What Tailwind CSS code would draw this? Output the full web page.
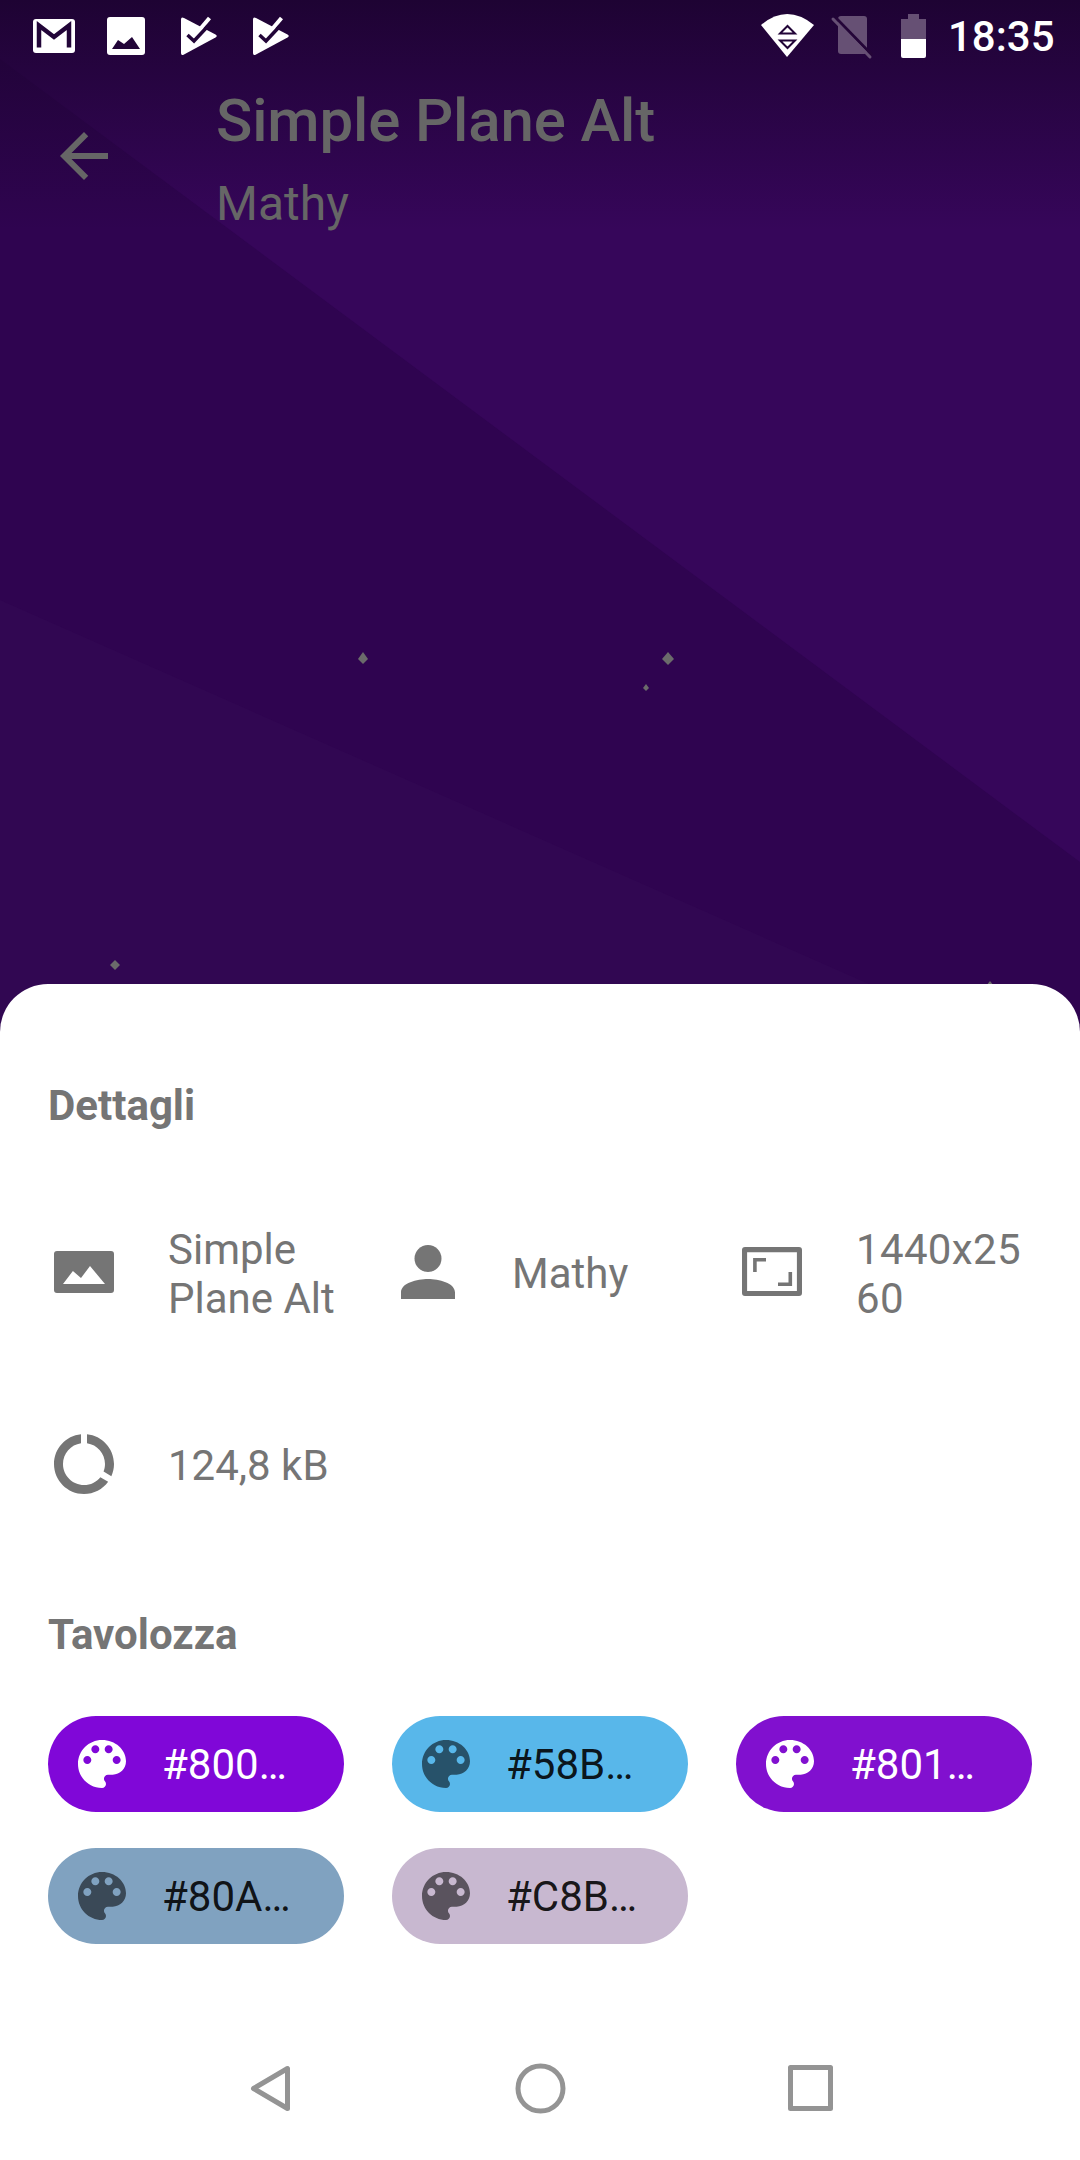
<!DOCTYPE html>
<html>
<head>
<meta charset="utf-8">
<script src="https://cdn.jsdelivr.net/npm/@tailwindcss/browser@4"></script>
</head>
<body class="m-0">
<div class="relative w-[1080px] h-[2160px] overflow-hidden flex flex-col font-['Roboto',sans-serif] bg-[#2f0450]">
  <!-- wallpaper -->
  <svg class="absolute left-0 top-0 w-[1080px] h-[1040px]" viewBox="0 0 1080 1040">
    <defs>
      <linearGradient id="scrim" x1="0" y1="0" x2="0" y2="1">
        <stop offset="0" stop-color="#1e0333" stop-opacity="1"/>
        <stop offset="1" stop-color="#1e0333" stop-opacity="0"/>
      </linearGradient>
    </defs>
    <rect width="1080" height="1040" fill="#2f0450"/>
    <polygon points="0,59 1080,862 1080,0 0,0" fill="#36065a"/>
    <polygon points="0,600 996,1040 0,1040" fill="#310752"/>
    <rect width="1080" height="230" fill="url(#scrim)"/>
    <g fill="#6b6b6b">
      <polygon points="363,652 368,659 363,664 358,659"/>
      <polygon points="668,652 674,659 668,665 662,659"/>
      <polygon points="646,684 649,688 646,691 643,688"/>
      <polygon points="115,960 120,965 115,970 110,965"/>
      <polygon points="990,981 994,986 986,986"/>
    </g>
  </svg>

  <!-- top area -->
  <div class="relative h-[984px] shrink-0">
    <!-- status bar -->
    <div class="relative h-[72px]">
      <svg class="absolute left-0 top-0 w-[1080px] h-[72px]" viewBox="0 0 1080 72">
        <rect x="33" y="19" width="42" height="34" rx="3" fill="#fff"/>
        <path d="M39 47.500V25.500L54 37L69 25.500V47.500" fill="none" stroke="#220538" stroke-width="4.500"/>
        <rect x="107" y="17" width="38" height="38" rx="3" fill="#fff"/>
        <path d="M112 49L118 40L124 44L132 37L140 49Z" fill="#220538"/>
        <path d="M181 19.500Q181 16.500 184 18L215.500 34.500Q218 36 215.500 37.500L184 54.500Q181 56 181 53Z" fill="#fff"/>
        <path d="M209.500 18L196 34" fill="none" stroke="#fff" stroke-width="4"/>
        <path d="M187.500 35L194 41L208 26" fill="none" stroke="#220538" stroke-width="3.500"/>
        <g transform="translate(72 0)">
          <path d="M181 19.500Q181 16.500 184 18L215.500 34.500Q218 36 215.500 37.500L184 54.500Q181 56 181 53Z" fill="#fff"/>
          <path d="M209.500 18L196 34" fill="none" stroke="#fff" stroke-width="4"/>
          <path d="M187.500 35L194 41L208 26" fill="none" stroke="#220538" stroke-width="3.500"/>
        </g>
        <path d="M761 25Q787 3 814 25L787 57Z" fill="#fff"/>
        <path d="M787.500 26L780 33.500H795ZM787.500 48L780 40.500H795Z" fill="none" stroke="#220538" stroke-width="2"/>
        <rect x="838" y="16" width="29" height="38" rx="3" fill="#665074"/>
        <path d="M836 18L872 55" stroke="#240538" stroke-width="3"/>
        <path d="M833 19L870 57" stroke="#665074" stroke-width="3" stroke-linecap="round"/>
        <path d="M908 14H919V19H926V39H901V19H908Z" fill="#665074"/>
        <path d="M901 39H926V56Q926 58 924 58H903Q901 58 901 56Z" fill="#fff"/>
      </svg>
      <span class="absolute left-[948px] top-[12px] text-[42px] leading-[49px] font-medium text-white">18:35</span>
    </div>
    <!-- app bar -->
    <div class="relative flex items-start pl-[48px] pt-[14px]">
      <svg class="w-[72px] h-[72px] mt-[34px] shrink-0 fill-[#666666]" viewBox="0 0 24 24"><path d="M20 11H7.830l5.590-5.590L12 4l-8 8 8 8 1.410-1.410L7.830 13H20v-2z"/></svg>
      <div class="ml-[96px] flex flex-col">
        <span class="text-[60px] leading-[70px] font-medium tracking-[-0.15px] text-[#666666]">Simple Plane Alt</span>
        <span class="text-[48px] leading-[56px] mt-[20px] text-[#666666]">Mathy</span>
      </div>
    </div>
  </div>

  <!-- sheet -->
  <div class="relative flex-1 bg-white rounded-t-[48px] px-[48px] pt-[97px]">
    <h2 class="text-[42px] leading-[49px] font-bold text-[#757575]">Dettagli</h2>
    <div class="grid grid-cols-3 gap-x-[48px] gap-y-[48px] mt-[70px] text-[#757575] text-[42px] leading-[49px]">
      <div class="flex items-center h-[144px] gap-[48px]">
        <svg class="w-[72px] h-[72px] shrink-0 fill-[#757575]" viewBox="0 0 24 24"><path fill-rule="evenodd" d="M3 5H21Q22 5 22 6V18Q22 19 21 19H3Q2 19 2 18V6Q2 5 3 5ZM5 16H19L14 10L11 14L8.300 11.700Z"/></svg>
        <div class="w-[176px] pt-[3px] break-words">Simple Plane Alt</div>
      </div>
      <div class="flex items-center h-[144px] gap-[48px]">
        <svg class="w-[72px] h-[72px] shrink-0 fill-[#757575]" viewBox="0 0 24 24"><circle cx="12" cy="7.500" r="4.500"/><path d="M12 14.300c-3.600 0-9 1.300-9 4.500V21h18v-2.200c0-3.200-5.400-4.500-9-4.500z"/></svg>
        <div class="w-[176px] pt-[3px] break-words">Mathy</div>
      </div>
      <div class="flex items-center h-[144px] gap-[48px]">
        <svg class="w-[72px] h-[72px] shrink-0 fill-[#757575]" viewBox="0 0 24 24"><path fill-rule="evenodd" d="M3 3.700H21Q22 3.700 22 4.700V19Q22 20 21 20H3Q2 20 2 19V4.700Q2 3.700 3 3.700ZM3.700 5.400V18.300H20.300V5.400Z"/><path d="M5.700 7.300H10V8.500H6.900V12H5.700ZM18.700 12V16.700H14V15.500H17.500V12Z"/></svg>
        <div class="w-[176px] pt-[3px] tracking-[0.35px] break-words">1440x2560</div>
      </div>
      <div class="flex items-center h-[144px] gap-[48px]">
        <svg class="w-[72px] h-[72px] shrink-0 fill-[#757575]" viewBox="0 0 24 24"><path d="M13 2.050v3.030c3.390.49 6 3.390 6 6.920 0 .9-.18 1.750-.48 2.540l2.600 1.530c.56-1.240.88-2.620.88-4.070 0-5.180-3.950-9.450-9-9.950zM12 19c-3.870 0-7-3.130-7-7 0-3.530 2.610-6.430 6-6.920V2.050c-5.060.5-9 4.760-9 9.950 0 5.520 4.470 10 9.990 10 3.310 0 6.240-1.610 8.060-4.090l-2.600-1.530C16.170 17.980 14.210 19 12 19z"/></svg>
        <div class="w-[176px] pt-[3px] break-words">124,8 kB</div>
      </div>
    </div>
    <h2 class="mt-[74px] text-[42px] leading-[49px] font-bold text-[#757575]">Tavolozza</h2>
    <div class="grid grid-cols-3 gap-x-[48px] gap-y-[36px] mt-[57px] text-[42px] leading-[49px]">
      <div class="flex items-center h-[96px] rounded-full bg-[#8007d8] pl-[22px] gap-[28px] text-white">
        <svg class="w-[64px] h-[64px] shrink-0 fill-white" viewBox="0 0 24 24"><path d="M12 3c-4.970 0-9 4.030-9 9s4.030 9 9 9c.83 0 1.500-.67 1.500-1.500 0-.39-.15-.74-.39-1.010-.23-.26-.38-.61-.38-.99 0-.83.67-1.500 1.500-1.500H16c2.760 0 5-2.240 5-5 0-4.420-4.030-8-9-8zm-5.500 9c-.83 0-1.500-.67-1.500-1.500S5.670 9 6.500 9 8 9.670 8 10.500 7.330 12 6.500 12zm3-4C8.670 8 8 7.330 8 6.500S8.670 5 9.500 5s1.500.67 1.500 1.500S10.330 8 9.500 8zm5 0c-.83 0-1.500-.67-1.500-1.500S13.670 5 14.500 5s1.500.67 1.500 1.500S15.330 8 14.500 8zm3 4c-.83 0-1.500-.67-1.500-1.500S16.670 9 17.500 9s1.500.67 1.500 1.500-.67 1.500-1.500 1.500z"/></svg>
        <span>#800…</span>
      </div>
      <div class="flex items-center h-[96px] rounded-full bg-[#58b7ea] pl-[22px] gap-[28px] text-black/90">
        <svg class="w-[64px] h-[64px] shrink-0 fill-black/55" viewBox="0 0 24 24"><path d="M12 3c-4.970 0-9 4.030-9 9s4.030 9 9 9c.83 0 1.500-.67 1.500-1.500 0-.39-.15-.74-.39-1.010-.23-.26-.38-.61-.38-.99 0-.83.67-1.500 1.500-1.500H16c2.760 0 5-2.240 5-5 0-4.420-4.030-8-9-8zm-5.500 9c-.83 0-1.500-.67-1.500-1.500S5.670 9 6.500 9 8 9.670 8 10.500 7.330 12 6.500 12zm3-4C8.670 8 8 7.330 8 6.500S8.670 5 9.500 5s1.500.67 1.500 1.500S10.330 8 9.500 8zm5 0c-.83 0-1.500-.67-1.500-1.500S13.670 5 14.500 5s1.500.67 1.500 1.500S15.330 8 14.500 8zm3 4c-.83 0-1.500-.67-1.500-1.500S16.670 9 17.500 9s1.500.67 1.500 1.500-.67 1.500-1.500 1.500z"/></svg>
        <span>#58B…</span>
      </div>
      <div class="flex items-center h-[96px] rounded-full bg-[#8110cf] pl-[22px] gap-[28px] text-white">
        <svg class="w-[64px] h-[64px] shrink-0 fill-white" viewBox="0 0 24 24"><path d="M12 3c-4.970 0-9 4.030-9 9s4.030 9 9 9c.83 0 1.500-.67 1.500-1.500 0-.39-.15-.74-.39-1.010-.23-.26-.38-.61-.38-.99 0-.83.67-1.500 1.500-1.500H16c2.760 0 5-2.240 5-5 0-4.420-4.030-8-9-8zm-5.500 9c-.83 0-1.500-.67-1.500-1.500S5.670 9 6.500 9 8 9.670 8 10.500 7.330 12 6.500 12zm3-4C8.670 8 8 7.330 8 6.500S8.670 5 9.500 5s1.500.67 1.500 1.500S10.330 8 9.500 8zm5 0c-.83 0-1.500-.67-1.500-1.500S13.670 5 14.500 5s1.500.67 1.500 1.500S15.330 8 14.500 8zm3 4c-.83 0-1.500-.67-1.500-1.500S16.670 9 17.500 9s1.500.67 1.500 1.500-.67 1.500-1.500 1.500z"/></svg>
        <span>#801…</span>
      </div>
      <div class="flex items-center h-[96px] rounded-full bg-[#80a2c0] pl-[22px] gap-[28px] text-black/90">
        <svg class="w-[64px] h-[64px] shrink-0 fill-black/55" viewBox="0 0 24 24"><path d="M12 3c-4.970 0-9 4.030-9 9s4.030 9 9 9c.83 0 1.500-.67 1.500-1.500 0-.39-.15-.74-.39-1.010-.23-.26-.38-.61-.38-.99 0-.83.67-1.500 1.500-1.500H16c2.760 0 5-2.240 5-5 0-4.420-4.030-8-9-8zm-5.500 9c-.83 0-1.500-.67-1.500-1.500S5.670 9 6.500 9 8 9.670 8 10.500 7.330 12 6.500 12zm3-4C8.670 8 8 7.330 8 6.500S8.670 5 9.500 5s1.500.67 1.500 1.500S10.330 8 9.500 8zm5 0c-.83 0-1.500-.67-1.500-1.500S13.670 5 14.500 5s1.500.67 1.500 1.500S15.330 8 14.500 8zm3 4c-.83 0-1.500-.67-1.500-1.500S16.670 9 17.500 9s1.500.67 1.500 1.500-.67 1.500-1.500 1.500z"/></svg>
        <span>#80A…</span>
      </div>
      <div class="flex items-center h-[96px] rounded-full bg-[#c8b8d0] pl-[22px] gap-[28px] text-black/90">
        <svg class="w-[64px] h-[64px] shrink-0 fill-black/55" viewBox="0 0 24 24"><path d="M12 3c-4.970 0-9 4.030-9 9s4.030 9 9 9c.83 0 1.500-.67 1.500-1.500 0-.39-.15-.74-.39-1.010-.23-.26-.38-.61-.38-.99 0-.83.67-1.500 1.500-1.500H16c2.760 0 5-2.240 5-5 0-4.420-4.030-8-9-8zm-5.500 9c-.83 0-1.500-.67-1.500-1.500S5.670 9 6.500 9 8 9.670 8 10.500 7.330 12 6.500 12zm3-4C8.670 8 8 7.330 8 6.500S8.670 5 9.500 5s1.500.67 1.500 1.500S10.330 8 9.500 8zm5 0c-.83 0-1.500-.67-1.500-1.500S13.670 5 14.500 5s1.500.67 1.500 1.500S15.330 8 14.500 8zm3 4c-.83 0-1.500-.67-1.500-1.500S16.670 9 17.500 9s1.500.67 1.500 1.500-.67 1.500-1.500 1.500z"/></svg>
        <span>#C8B…</span>
      </div>
    </div>
    <!-- navigation bar -->
    <svg class="absolute left-0 bottom-0 w-[1080px] h-[144px]" viewBox="0 2016 1080 144" fill="none" stroke="#949494" stroke-width="5" stroke-linejoin="round">
      <path d="M253.500 2088.500L287.500 2068.500V2108.500Z"/>
      <circle cx="540.500" cy="2088.500" r="22.500"/>
      <rect x="790.500" y="2067.500" width="40" height="41"/>
    </svg>
  </div>
</div>
</body>
</html>
